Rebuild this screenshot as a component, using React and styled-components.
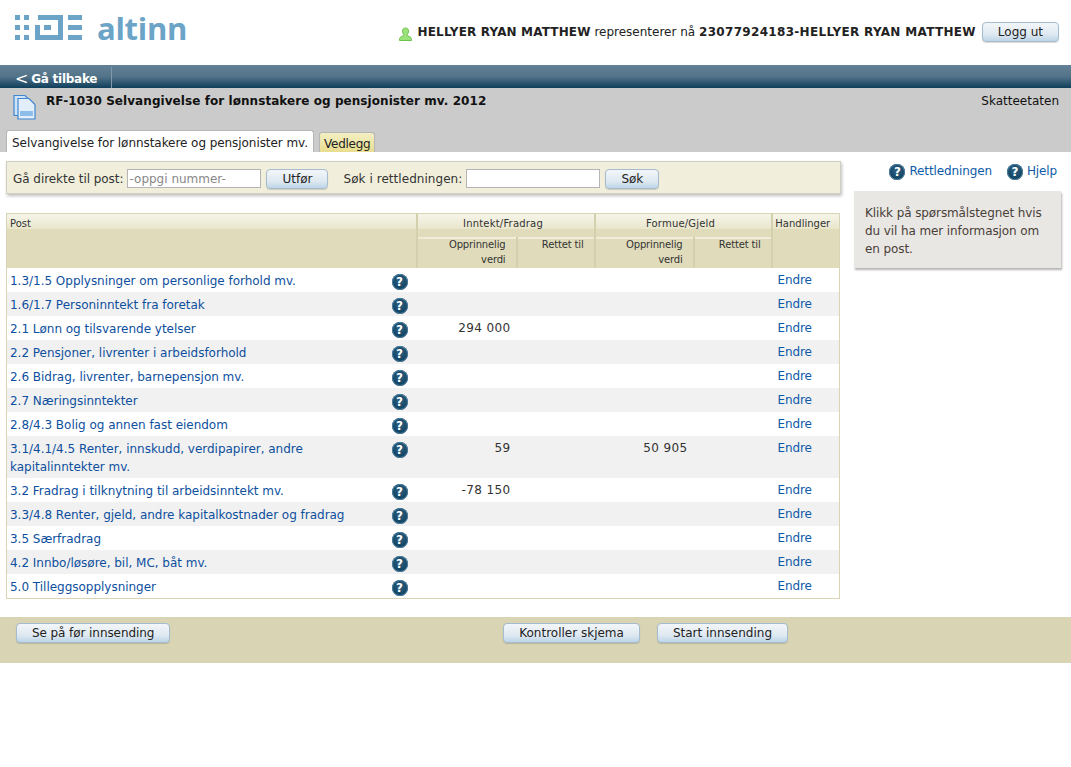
import React from "react";
import styled, { createGlobalStyle } from "styled-components";

const rows = [
  { post: "1.3/1.5 Opplysninger om personlige forhold mv." },
  { post: "1.6/1.7 Personinntekt fra foretak" },
  { post: "2.1 Lønn og tilsvarende ytelser", income: "294 000" },
  { post: "2.2 Pensjoner, livrenter i arbeidsforhold" },
  { post: "2.6 Bidrag, livrenter, barnepensjon mv." },
  { post: "2.7 Næringsinntekter" },
  { post: "2.8/4.3 Bolig og annen fast eiendom" },
  {
    post: "3.1/4.1/4.5 Renter, innskudd, verdipapirer, andre kapitalinntekter mv.",
    income: "59",
    wealth: "50 905",
  },
  { post: "3.2 Fradrag i tilknytning til arbeidsinntekt mv.", income: "-78 150" },
  { post: "3.3/4.8 Renter, gjeld, andre kapitalkostnader og fradrag" },
  { post: "3.5 Særfradrag" },
  { post: "4.2 Innbo/løsøre, bil, MC, båt mv." },
  { post: "5.0 Tilleggsopplysninger" },
];

const App = () => {
  return (
    <Page>
      <GlobalStyle />
      <Header>
        <Logo>
          <LogoMark />
          <LogoText>altinn</LogoText>
        </Logo>
        <UserInfo>
          <UserIcon />
          <span>
            <UserName>HELLYER RYAN MATTHEW</UserName> representerer nå{" "}
            <UserName $wide>23077924183-HELLYER RYAN MATTHEW</UserName>
          </span>
          <Button>Logg ut</Button>
        </UserInfo>
      </Header>

      <NavBar>
        <BackLink>
          <BackArrow>&lt;</BackArrow> Gå tilbake
        </BackLink>
      </NavBar>

      <FormBand>
        <TitleRow>
          <DocIcon />
          <FormTitle>RF-1030 Selvangivelse for lønnstakere og pensjonister mv. 2012</FormTitle>
          <Agency>Skatteetaten</Agency>
        </TitleRow>
        <Tabs>
          <Tab $active>Selvangivelse for lønnstakere og pensjonister mv.</Tab>
          <Tab>Vedlegg</Tab>
        </Tabs>
      </FormBand>

      <Content>
        <Main>
          <SearchBar>
            <PostLabel>Gå direkte til post:</PostLabel>
            <Input placeholder="-oppgi nummer-" />
            <Button>Utfør</Button>
            <SearchLabel>Søk i rettledningen:</SearchLabel>
            <Input />
            <Button $wide>Søk</Button>
          </SearchBar>

          <Table>
            <colgroup>
              <col style={{ width: 410 }} />
              <col style={{ width: 100 }} />
              <col style={{ width: 78 }} />
              <col style={{ width: 99 }} />
              <col style={{ width: 78 }} />
              <col />
            </colgroup>
            <thead>
              <tr>
                <HeadCell rowSpan={2}>
                  <HeadTop>Post</HeadTop>
                </HeadCell>
                <HeadCell colSpan={2}>
                  <HeadTop $group>Inntekt/Fradrag</HeadTop>
                </HeadCell>
                <HeadCell colSpan={2}>
                  <HeadTop $group>Formue/Gjeld</HeadTop>
                </HeadCell>
                <HeadCell rowSpan={2}>
                  <HeadTop $action>Handlinger</HeadTop>
                </HeadCell>
              </tr>
              <tr>
                <SubHead>Opprinnelig verdi</SubHead>
                <SubHead>Rettet til</SubHead>
                <SubHead>Opprinnelig verdi</SubHead>
                <SubHead>Rettet til</SubHead>
              </tr>
            </thead>
            <tbody>
              {rows.map((row) => (
                <Row key={row.post}>
                  <PostCell>
                    <PostLink>{row.post}</PostLink>
                    <HelpIcon $inRow>?</HelpIcon>
                  </PostCell>
                  <Amount>{row.income}</Amount>
                  <Amount />
                  <Amount>{row.wealth}</Amount>
                  <Amount />
                  <ActionCell>
                    <TextLink>Endre</TextLink>
                  </ActionCell>
                </Row>
              ))}
            </tbody>
          </Table>
        </Main>

        <Side>
          <SideLinks>
            <SideLink>
              <HelpIcon>?</HelpIcon>
              <TextLink>Rettledningen</TextLink>
            </SideLink>
            <SideLink>
              <HelpIcon>?</HelpIcon>
              <TextLink>Hjelp</TextLink>
            </SideLink>
          </SideLinks>
          <InfoBox>Klikk på spørsmålstegnet hvis du vil ha mer informasjon om en post.</InfoBox>
        </Side>
      </Content>

      <Footer>
        <Button $tight>Se på før innsending</Button>
        <FooterRight>
          <Button>Kontroller skjema</Button>
          <Button>Start innsending</Button>
        </FooterRight>
      </Footer>
    </Page>
  );
};

const LogoMark = () => (
  <svg width="67" height="25" viewBox="0 0 67 25" fill="#6ba4c6">
    <rect x="0" y="0" width="5" height="5" />
    <rect x="9" y="0" width="5" height="5" />
    <rect x="0" y="10" width="5" height="5" />
    <rect x="9" y="10" width="5" height="5" />
    <rect x="0" y="20" width="5" height="5" />
    <rect x="9" y="20" width="5" height="5" />
    <path d="M23 0h25v25H20V10h5v10h18V5H23z" />
    <rect x="29" y="10" width="7" height="5" />
    <rect x="53" y="0" width="14" height="5" />
    <rect x="53" y="10" width="14" height="5" />
    <rect x="53" y="20" width="14" height="5" />
  </svg>
);

const UserIcon = () => (
  <svg width="13" height="14" viewBox="0 0 13 14">
    <path d="M6.5 1c2 0 3 1.500 3 3.200 0 1.500-.7 2.600-1.300 3.200v1l3.300 1.800c.7.400 1 1.200 1 3.300H.5c0-2.100.3-2.900 1-3.300l3.300-1.800v-1C4.200 6.800 3.500 5.700 3.500 4.200 3.500 2.500 4.500 1 6.500 1z" fill="#9be27a" stroke="#6cc04c" />
  </svg>
);

const DocIcon = () => (
  <svg width="23" height="26" viewBox="0 0 23 26">
    <path d="M1 1.500h11l4 4v16H1z" fill="#cfe2f6" stroke="#3f86cf" strokeWidth="1.200" />
    <path d="M5 4.500h11l6 6v14.500H5z" fill="#e2eefa" stroke="#3f86cf" strokeWidth="1.200" />
    <rect x="7" y="17" width="13" height="5" fill="#8dbdea" />
  </svg>
);

const GlobalStyle = createGlobalStyle`
  body {
    margin: 0;
    background: #fff;
    font-family: "DejaVu Sans", Verdana, sans-serif;
    font-size: 12px;
    color: #222;
  }
`;

const Page = styled.div`
  width: 1071px;
  height: 767px;
  overflow: hidden;
`;

const Header = styled.header`
  display: flex;
  justify-content: space-between;
  height: 65px;
  padding: 0 12px 0 15px;
`;

const Logo = styled.div`
  display: flex;
  align-items: flex-start;
  gap: 15px;
  padding-top: 15px;
`;

const LogoText = styled.span`
  font-family: "Open Sans", sans-serif;
  font-size: 31px;
  font-weight: 700;
  line-height: 26px;
  letter-spacing: -0.3px;
  color: #6ba4c6;
`;

const UserInfo = styled.div`
  display: flex;
  align-items: center;
  gap: 6px;
  height: 20px;
  margin-top: 22px;
  svg {
    margin-top: 3px;
  }
`;

const UserName = styled.b`
  font-weight: 700;
  letter-spacing: ${(p) => (p.$wide ? 0.31 : 0.15)}px;
`;

const Button = styled.button`
  height: 20px;
  padding: 0 15px;
  min-width: ${(p) => (p.$wide ? 54 : 0)}px;
  border: 1px solid #a4bccd;
  border-radius: 4px;
  background: linear-gradient(to bottom, #f2f6f9 0%, #dfe9f1 62%, #bdd5e8 100%);
  box-shadow: 0 1px 1px rgba(0, 0, 0, 0.15);
  font-family: inherit;
  font-size: 12px;
  letter-spacing: ${(p) => (p.$tight ? -0.08 : 0)}px;
  color: #222;
  white-space: nowrap;
`;

const NavBar = styled.nav`
  display: flex;
  height: 23px;
  background: linear-gradient(to bottom, #638197 0%, #537389 50%, #0f3f5c 100%);
`;

const BackLink = styled.a`
  display: flex;
  align-items: center;
  gap: 3px;
  width: 112px;
  box-sizing: border-box;
  height: 21px;
  margin-top: 2px;
  padding: 2px 0 0 15px;
  border-right: 1px solid #7f99ab;
  color: #fff;
  font-weight: 700;
  font-size: 12px;
  letter-spacing: -0.25px;
`;

const BackArrow = styled.span`
  font-size: 16px;
  font-weight: 400;
  line-height: 15px;
`;

const FormBand = styled.div`
  display: flex;
  flex-direction: column;
  justify-content: space-between;
  height: 64px;
  background: #cbcbcb;
`;

const TitleRow = styled.div`
  display: flex;
  align-items: flex-start;
  padding: 6px 12px 0 13px;
`;

const FormTitle = styled.h1`
  flex: 1;
  margin: 0 0 0 10px;
  font-size: 12px;
  line-height: 14px;
  font-weight: 700;
  letter-spacing: 0.065px;
  color: #111;
`;

const Agency = styled.span`
  line-height: 14px;
  color: #111;
`;

const Tabs = styled.div`
  display: flex;
  align-items: flex-end;
  gap: 5px;
  padding-left: 6px;
`;

const Tab = styled.div`
  height: ${(p) => (p.$active ? 21 : 19)}px;
  line-height: ${(p) => (p.$active ? 25 : 23)}px;
  padding: 0 ${(p) => (p.$active ? 5 : 4)}px;
  border: 1px solid #b5b5b5;
  border-bottom: 0;
  border-radius: 3px 3px 0 0;
  color: #222;
  letter-spacing: ${(p) => (p.$active ? -0.06 : -0.25)}px;
  background: ${(p) => (p.$active ? "#fff" : "linear-gradient(to bottom, #f3efc4, #e9dd8e)")};
`;

const Content = styled.div`
  display: flex;
  align-items: flex-start;
  height: 465px;
`;

const Main = styled.main`
  flex: none;
  width: 853px;
  box-sizing: border-box;
  padding: 9px 0 0 6px;
`;

const SearchBar = styled.div`
  display: flex;
  align-items: center;
  box-sizing: border-box;
  width: 835px;
  height: 33px;
  padding: 2px 6px 0;
  border: 1px solid #cfcfc4;
  background: #f1efdc;
  box-shadow: 1px 2px 3px rgba(0, 0, 0, 0.25);
  color: #333;
  gap: 4px;
  button {
    margin-left: 1px;
  }
`;

const PostLabel = styled.label`
  letter-spacing: -0.05px;
`;

const SearchLabel = styled.label`
  margin-left: 11px;
  letter-spacing: 0.05px;
`;

const Input = styled.input`
  box-sizing: border-box;
  width: 134px;
  height: 19px;
  padding: 0 1px;
  border: 1px solid #b5b5b5;
  background: #fff;
  font-family: inherit;
  font-size: 12px;
  &::placeholder {
    color: #888;
    opacity: 1;
  }
`;

const Table = styled.table`
  width: 834px;
  margin-top: 19px;
  border-collapse: collapse;
  table-layout: fixed;
  border: 1px solid #d8d4b4;
`;

const HeadCell = styled.th`
  height: 23px;
  padding: 0;
  vertical-align: top;
  background: #e0dcbb;
  border-left: 2px solid #d4d0ae;
  font-weight: 400;
  font-size: 10px;
  color: #333;
  &:first-child {
    border-left: 0;
  }
`;

const HeadTop = styled.div`
  height: 15px;
  line-height: 20px;
  padding: ${(p) => (p.$group ? "0 5px 0 0" : p.$action ? "0 6px 0 0" : "0 3px")};
  text-align: ${(p) => (p.$group || p.$action ? "center" : "left")};
  letter-spacing: ${(p) => (p.$group ? 0.2 : 0)}px;
  background: linear-gradient(to bottom, #f6f5e9, #e9e6cc);
`;

const SubHead = styled.th`
  box-sizing: border-box;
  height: 31px;
  padding: 0 10px 1px 20px;
  vertical-align: top;
  text-align: right;
  background: linear-gradient(to bottom, #efedd9 2px, #e0dcbb 2px);
  border-left: 2px solid #d4d0ae;
  font-weight: 400;
  font-size: 10px;
  line-height: 15px;
  letter-spacing: -0.15px;
  color: #333;
`;

const Row = styled.tr`
  &:nth-child(even) {
    background: #f1f1f1;
  }
`;

const PostCell = styled.td`
  position: relative;
  height: 24px;
  box-sizing: border-box;
  padding: 4px 52px 2px 3px;
  line-height: 18px;
  vertical-align: top;
`;

const PostLink = styled.a`
  color: #0d4f9e;
  letter-spacing: -0.02px;
`;

const TextLink = styled.a`
  color: #0d5aa8;
  line-height: 18px;
  letter-spacing: -0.12px;
`;

const HelpIcon = styled.span`
  display: inline-flex;
  align-items: center;
  justify-content: center;
  flex: none;
  width: 16px;
  height: 16px;
  border-radius: 50%;
  background: radial-gradient(circle at 50% 40%, #2f6283 0%, #144766 60%, #0c3450 100%);
  box-shadow: inset 0 0 0 1px #4d7d9b;
  color: #fff;
  font-size: 12px;
  font-weight: 700;
  line-height: 16px;
  ${(p) => p.$inRow && "position: absolute; top: 6px; right: 9px;"}
`;

const Amount = styled.td`
  padding: 3px 6px 0 0;
  line-height: 18px;
  vertical-align: top;
  text-align: right;
  font-size: 12px;
  letter-spacing: 0.37px;
  color: #333;
`;

const ActionCell = styled.td`
  padding: 3px 0 0 6px;
  vertical-align: top;
  line-height: 18px;
`;

const Side = styled.aside`
  flex: 1;
  padding-top: 10px;
`;

const SideLinks = styled.div`
  display: flex;
  justify-content: flex-end;
  gap: 15px;
  height: 18px;
  padding-right: 14px;
`;

const SideLink = styled.div`
  display: flex;
  align-items: flex-start;
  gap: 4px;
  ${HelpIcon} {
    margin-top: 2px;
  }
`;

const InfoBox = styled.div`
  box-sizing: border-box;
  width: 207px;
  height: 77px;
  margin: 11px 0 0 1px;
  padding: 13px 11px;
  background: #e9e7e4;
  box-shadow: 1px 2px 2px rgba(0, 0, 0, 0.3);
  line-height: 18px;
  letter-spacing: -0.1px;
  color: #4a4038;
`;

const Footer = styled.footer`
  display: flex;
  height: 46px;
  box-sizing: border-box;
  padding: 6px 283px 0 16px;
  background: #d8d4b4;
  justify-content: space-between;
  align-items: flex-start;
`;

const FooterRight = styled.div`
  display: flex;
  gap: 17px;
`;

export default App;
